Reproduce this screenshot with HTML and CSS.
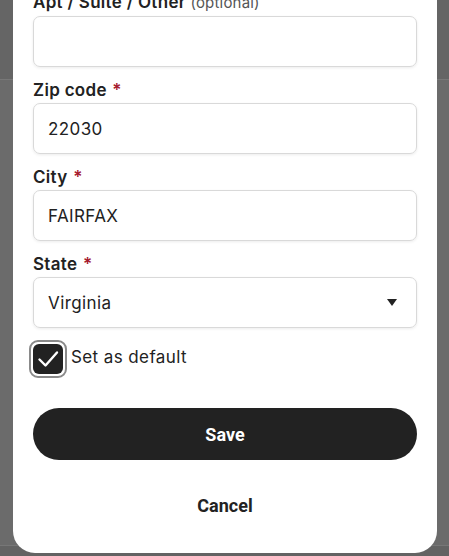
FILE: index.html
```html
<!DOCTYPE html>
<html>
<head>
<meta charset="utf-8">
<link rel="stylesheet" href="styles.css">
</head>
<body>
<div class="backdrop">
  <div class="bg-header"></div>
  <div class="bg-foot"></div>
  <div class="modal">
    <div class="field">
      <label class="label">Apt / Suite / Other <span class="opt">(optional)</span></label>
      <div class="input"></div>
    </div>
    <div class="field">
      <label class="label">Zip code <span class="req">*</span></label>
      <div class="input">22030</div>
    </div>
    <div class="field">
      <label class="label">City <span class="req">*</span></label>
      <div class="input">FAIRFAX</div>
    </div>
    <div class="field">
      <label class="label">State <span class="req">*</span></label>
      <div class="input select">Virginia
        <svg class="caret" width="10" height="7" viewBox="0 0 10 7"><path d="M0 0 H10 L5 7 Z" fill="#222"/></svg>
      </div>
    </div>
    <div class="check-row">
      <span class="check-ring"><span class="check-box">
        <svg width="24" height="24" viewBox="0 0 24 24"><path d="M3.5 12.5 L9.5 18.5 L21 5.5" fill="none" stroke="#fff" stroke-width="2.4" stroke-linecap="round" stroke-linejoin="round"/></svg>
      </span></span>
      <span class="check-label">Set as default</span>
    </div>
    <button class="btn-save">Save</button>
    <button class="btn-cancel">Cancel</button>
  </div>
</div>
</body>
</html>
```

FILE: styles.css
```css
* { box-sizing: border-box; }
html, body { margin: 0; padding: 0; width: 449px; height: 556px; overflow: hidden; }
body { font-family: "Inter", "Liberation Sans", sans-serif; color: #222; }
.backdrop {
  position: relative;
  width: 449px;
  height: 556px;
  background: #6b6b6b;
  overflow: hidden;
}
.bg-header {
  position: absolute; left: 0; top: 0; width: 449px; height: 80px;
  background: #656565; border-bottom: 1px solid #787878;
}
.bg-foot {
  position: absolute; left: 0; top: 545px; width: 449px; height: 11px;
  background: #636363; border-top: 1px solid #777;
}
.modal {
  position: absolute;
  left: 13px;
  top: -32px;
  width: 424px;
  height: 585px;
  background: #fff;
  border-radius: 0 0 22px 22px;
  padding: 22px 20px 0 20px;
  display: flex;
  flex-direction: column;
}
.field { display: flex; flex-direction: column; margin-bottom: 11px; }
.label {
  font-size: 17px;
  font-weight: 600;
  line-height: 24px;
  margin-bottom: 1px;
  letter-spacing: 0.3px;
}
.opt { font-size: 15px; font-weight: 400; color: #555; letter-spacing: 0.2px; }
.req { color: #a61a2e; font-weight: 600; margin-left: 1px; }
.input {
  height: 51px;
  border: 1px solid #d9d9d9;
  border-radius: 7px;
  box-shadow: 0 1px 3px rgba(0,0,0,0.08);
  padding: 0 14px;
  display: flex;
  align-items: center;
  font-size: 17px;
  letter-spacing: 0.4px;
  color: #222;
}
.select { justify-content: space-between; }
.caret { margin-right: 5px; }
.check-row {
  display: flex;
  align-items: center;
  margin-top: 1px;
  height: 38px;
}
.check-ring {
  width: 38px; height: 38px;
  border: 2px solid #8a8a8a;
  border-radius: 9px;
  padding: 2px;
  margin-left: -4px;
  display: flex;
}
.check-box {
  flex: 1;
  background: #222;
  border-radius: 6px;
  display: flex; align-items: center; justify-content: center;
}
.check-label { font-size: 17px; margin-left: 4px; letter-spacing: 0.4px; margin-top: -4px; }
.btn-save {
  margin-top: 30px;
  height: 52px;
  border: none;
  border-radius: 26px;
  background: #222;
  color: #fff;
  font-family: "Roboto", "Liberation Sans", sans-serif;
  font-weight: 700;
  font-size: 18px;
}
.btn-cancel {
  margin-top: 24px;
  height: 42px;
  border: none;
  background: transparent;
  color: #222;
  font-family: "Roboto", "Liberation Sans", sans-serif;
  font-weight: 700;
  font-size: 18px;
}
```
